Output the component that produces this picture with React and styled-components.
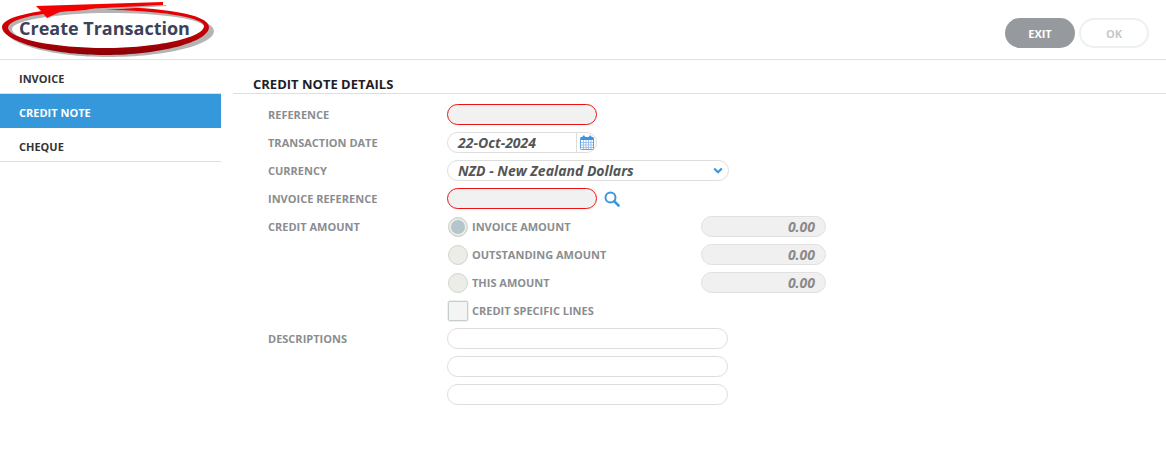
import React from 'react';
import styled, { createGlobalStyle } from 'styled-components';

const GlobalStyle = createGlobalStyle`
  html, body {
    margin: 0;
    padding: 0;
    background: #fff;
    font-family: "Open Sans", "Noto Sans", sans-serif;
  }
`;

const navItems = [
  { label: 'INVOICE' },
  { label: 'CREDIT NOTE', active: true },
  { label: 'CHEQUE' },
];

const amounts = [
  { label: 'INVOICE AMOUNT', checked: true },
  { label: 'OUTSTANDING AMOUNT' },
  { label: 'THIS AMOUNT' },
];

const Highlight = () => (
  <HighlightSvg width="220" height="60" viewBox="0 0 220 60">
    <defs>
      <linearGradient id="ring" x1="0" y1="0" x2="0" y2="1">
        <stop offset="0" stopColor="#f00000" />
        <stop offset="0.55" stopColor="#c00008" />
        <stop offset="1" stopColor="#8a0006" />
      </linearGradient>
    </defs>
    <path
      fill="#b4b4b4"
      fillRule="evenodd"
      d="M6 30C6 16 55 10 108 10C165 10 214 18 214 31C214 45 165 57 108 57C52 57 6 44 6 30ZM12 29C12 40 55 49 108 49C162 49 206 41 206 29C206 19 162 13 108 13C60 13 12 20 12 29Z"
    />
    <path
      fill="url(#ring)"
      fillRule="evenodd"
      d="M2 27C2 15 50 7 105 7C160 7 209 14 209 27C209 42 160 55 105 55C50 55 2 41 2 27ZM8 28C9 39 55 48 105 48C155 48 204 38 204 26C204 17 155 10 105 10C55 10 8 17 8 28Z"
    />
    <path fill="#b4b4b4" d="M50 17L47 19L60 13L166 6L167 5L100 7Z" />
    <path fill="#f40000" d="M36 6L163 2L163 5L64 10L47 18L41 11Z" />
  </HighlightSvg>
);

const CalendarIcon = () => (
  <svg width="14" height="15" viewBox="0 0 14 15">
    <rect x="0.5" y="2.5" width="13" height="12" rx="1" fill="#fff" stroke="#5aa6e2" />
    <rect x="0.5" y="2" width="13" height="3" rx="1" fill="#3a97dc" />
    <rect x="2.5" y="0.5" width="2.5" height="3.5" rx="1.2" fill="#3a97dc" />
    <rect x="9" y="0.5" width="2.5" height="3.5" rx="1.2" fill="#3a97dc" />
    <path
      d="M1 7.5H13M1 10H13M1 12.5H13M3.5 5V14M6 5V14M8.5 5V14M11 5V14"
      stroke="#8cb8f2"
      strokeWidth="0.8"
    />
  </svg>
);

const ChevronIcon = () => (
  <svg width="10" height="7" viewBox="0 0 10 7">
    <path d="M1.2 1.5L5 5.2L8.8 1.5" fill="none" stroke="#3a97dc" strokeWidth="2.2" />
  </svg>
);

const SearchIcon = () => (
  <svg width="16" height="16" viewBox="0 0 16 16">
    <circle cx="6.5" cy="6.5" r="5" fill="none" stroke="#3a97dc" strokeWidth="2" />
    <path d="M10.2 10.2L14.5 14.5" stroke="#3a97dc" strokeWidth="2.6" strokeLinecap="round" />
  </svg>
);

const App = () => (
  <Page>
    <GlobalStyle />
    <Header>
      <TitleWrap>
        <Highlight />
        <Title>Create Transaction</Title>
      </TitleWrap>
      <Actions>
        <ExitButton>EXIT</ExitButton>
        <OkButton>OK</OkButton>
      </Actions>
    </Header>
    <Body>
      <Sidebar>
        {navItems.map((item) => (
          <NavItem key={item.label} $active={item.active}>
            {item.label}
          </NavItem>
        ))}
      </Sidebar>
      <Main>
        <SectionTitle>CREDIT NOTE DETAILS</SectionTitle>
        <FormGrid>
          <Row>
            <Label>REFERENCE</Label>
            <Input $invalid />
          </Row>
          <Row>
            <Label>TRANSACTION DATE</Label>
            <DateBox>
              <DateText>22-Oct-2024</DateText>
              <DateButton>
                <CalendarIcon />
              </DateButton>
            </DateBox>
          </Row>
          <Row>
            <Label>CURRENCY</Label>
            <SelectBox>
              <span>NZD - New Zealand Dollars</span>
              <ChevronIcon />
            </SelectBox>
          </Row>
          <Row>
            <Label>INVOICE REFERENCE</Label>
            <Input $invalid />
            <SearchButton>
              <SearchIcon />
            </SearchButton>
          </Row>
          {amounts.map((amount, i) => (
            <Row key={amount.label}>
              <Label>{i === 0 ? 'CREDIT AMOUNT' : ''}</Label>
              <Radio $checked={amount.checked} />
              <OptionLabel>{amount.label}</OptionLabel>
              <AmountBox>0.00</AmountBox>
            </Row>
          ))}
          <Row>
            <Label />
            <Checkbox />
            <OptionLabel>CREDIT SPECIFIC LINES</OptionLabel>
          </Row>
          <Row>
            <Label>DESCRIPTIONS</Label>
            <Input $wide />
          </Row>
          <Row>
            <Label />
            <Input $wide />
          </Row>
          <Row>
            <Label />
            <Input $wide />
          </Row>
        </FormGrid>
      </Main>
    </Body>
  </Page>
);

export default App;

// region STYLES

const Page = styled.div`
  width: 1166px;
  height: 451px;
  overflow: hidden;
`;

const Header = styled.header`
  height: 59px;
  display: flex;
  justify-content: space-between;
  align-items: flex-start;
  border-bottom: 1px solid #dedee6;
`;

const TitleWrap = styled.div`
  position: relative;
  width: 220px;
  height: 59px;
  display: flex;
  padding: 16px 0 0 19px;
  box-sizing: border-box;
`;

const HighlightSvg = styled.svg`
  position: absolute;
  left: 0;
  top: 0;
`;

const Title = styled.h1`
  position: relative;
  margin: 0;
  font-size: 18px;
  line-height: 25px;
  font-weight: 700;
  color: #3c4359;
  white-space: nowrap;
`;

const Actions = styled.div`
  display: flex;
  gap: 4px;
  padding: 18px 17px 0 0;
`;

const ExitButton = styled.button`
  width: 70px;
  height: 30px;
  padding: 0;
  border: none;
  border-radius: 15px;
  background: #969a9e;
  color: #fff;
  font: 700 11px "Open Sans", sans-serif;
`;

const OkButton = styled(ExitButton)`
  background: #fff;
  border: 2px solid #edf0f0;
  color: #c6c9cc;
`;

const Body = styled.div`
  display: flex;
`;

const Sidebar = styled.nav`
  width: 221px;
  flex: none;
  display: flex;
  flex-direction: column;
`;

const NavItem = styled.div`
  height: 34px;
  box-sizing: border-box;
  padding: 4px 0 0 19px;
  display: flex;
  align-items: center;
  font-size: 11px;
  font-weight: 700;
  color: ${(p) => (p.$active ? '#fff' : '#333')};
  background: ${(p) => (p.$active ? '#3498db' : '#fff')};
  border-bottom: 1px solid ${(p) => (p.$active ? '#3498db' : '#dedee6')};
`;

const Main = styled.main`
  margin-left: 12px;
  flex: 1;
`;

const SectionTitle = styled.h2`
  margin: 0;
  height: 34px;
  box-sizing: border-box;
  padding: 16px 0 0 20px;
  font-size: 13px;
  line-height: 17px;
  font-weight: 700;
  color: #1e1e28;
  border-bottom: 1px solid #dedee6;
`;

const FormGrid = styled.div`
  padding: 7px 0 0 35px;
  display: flex;
  flex-direction: column;
`;

const Row = styled.div`
  height: 28px;
  display: flex;
  align-items: center;
`;

const Label = styled.label`
  width: 179px;
  flex: none;
  margin-bottom: 2px;
  font-size: 11px;
  font-weight: 700;
  color: #8a8d90;
`;

const Input = styled.div`
  width: ${(p) => (p.$wide ? '281px' : '150px')};
  height: 21px;
  margin-bottom: 1px;
  box-sizing: border-box;
  border-radius: 11px;
  border: 1px solid ${(p) => (p.$invalid ? '#ee1111' : '#dddddd')};
  background: ${(p) => (p.$invalid ? '#f1f1f1' : '#fff')};
`;

const DateBox = styled(Input)`
  display: flex;
  align-items: center;
  justify-content: space-between;
  border-color: #dddddd;
  background: #fff;
`;

const DateText = styled.span`
  padding-left: 10px;
  font-size: 14px;
  font-weight: 700;
  font-style: italic;
  color: #555;
`;

const DateButton = styled.span`
  width: 19px;
  height: 100%;
  display: flex;
  align-items: center;
  justify-content: center;
  border-left: 1px solid #dddddd;
`;

const SelectBox = styled(Input)`
  width: 282px;
  display: flex;
  align-items: center;
  justify-content: space-between;
  padding: 0 5px 0 10px;
  font-size: 14px;
  font-weight: 700;
  font-style: italic;
  color: #555;
`;

const SearchButton = styled.span`
  display: flex;
  margin-left: 7px;
`;

const Radio = styled.span`
  width: 20px;
  height: 20px;
  margin: 0 0 1px 1px;
  box-sizing: border-box;
  flex: none;
  border-radius: 50%;
  border: 1px solid #cfd6cf;
  background: ${(p) => (p.$checked ? '#b4c6c9' : '#ecede7')};
  box-shadow: ${(p) => (p.$checked ? 'inset 0 0 0 2px #ecede7' : 'none')};
`;

const OptionLabel = styled.span`
  margin: 0 0 2px 4px;
  width: 229px;
  flex: none;
  font-size: 11px;
  font-weight: 700;
  color: #8a8d90;
`;

const AmountBox = styled.div`
  width: 125px;
  height: 21px;
  margin-bottom: 1px;
  box-sizing: border-box;
  padding-right: 10px;
  border: 1px solid #e0e0e0;
  border-radius: 11px;
  background: #f0f0f0;
  text-align: right;
  font-size: 14px;
  line-height: 19px;
  font-weight: 700;
  font-style: italic;
  color: #8a8a8a;
`;

const Checkbox = styled.span`
  width: 20px;
  height: 20px;
  margin: 0 0 1px 1px;
  box-sizing: border-box;
  flex: none;
  border: 1px solid #c6cdcd;
  border-radius: 2px;
  background: #f3f4f4;
  box-shadow: 0 0 0 1px #eef0f0;
`;

// endregion
